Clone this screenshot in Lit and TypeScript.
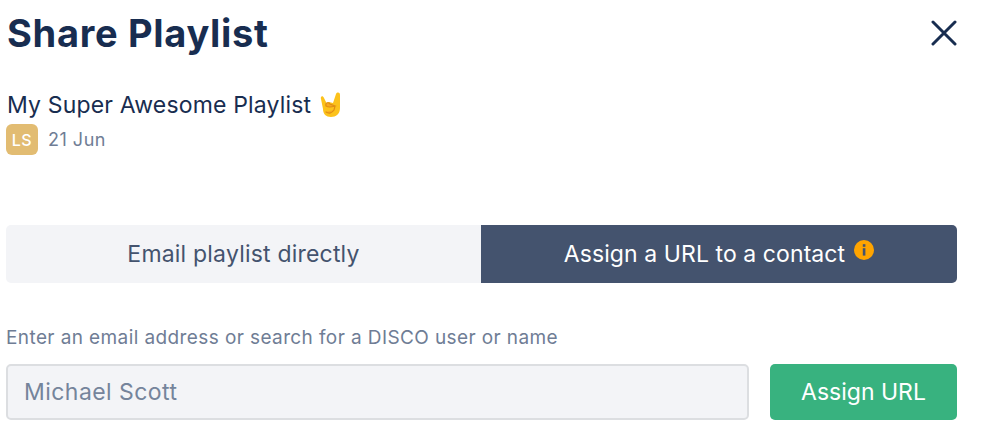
import { LitElement, html, css } from 'lit';
import { customElement } from 'lit/decorators.js';

@customElement("app-root")
export default class AppRoot extends LitElement {
    render() {
        return html`
            <div class="header">
                <h1>Share Playlist</h1>
                <svg class="close" width="26" height="26" viewBox="0 0 26 26">
                    <path d="M2 2 L24 24 M24 2 L2 24" stroke="#182d50" stroke-width="3" stroke-linecap="round"></path>
                </svg>
            </div>

            <div class="playlist">
                <span>My Super Awesome Playlist</span>
                <svg class="emoji" width="22" height="26" viewBox="0 0 22 26">
                    <path d="M1 7 C0 4 3 3 4 6 L7 12 L9 10 L13 11 L16 2 C17 0 20 0 20 3 L20 16 C20 22 16 25 11 25 C6 25 3 22 3 17 Z" fill="#fcc21b"></path>
                    <path d="M6 14 C5 10 9 10 10 12 L15 14 C12 15 9 16 6 14 Z M15 14 L14 18 M6 20 C9 22 12 21 14 18" fill="#f7a823" stroke="#e08e12" stroke-width="1.2" stroke-linecap="round"></path>
                </svg>
            </div>

            <div class="meta">
                <span class="avatar">LS</span>
                <span class="date">21 Jun</span>
            </div>

            <div class="tabs">
                <div class="tab">Email playlist directly</div>
                <div class="tab active">
                    <span>Assign a URL to a contact</span>
                    <svg class="info" width="20" height="20" viewBox="0 0 20 20">
                        <circle cx="10" cy="10" r="10" fill="#ffa400"></circle>
                        <rect x="8.8" y="4.2" width="2.6" height="2.6" fill="#44536e"></rect>
                        <rect x="8.8" y="8.2" width="2.6" height="7.4" fill="#44536e"></rect>
                    </svg>
                </div>
            </div>

            <div class="label">Enter an email address or search for a DISCO user or name</div>

            <div class="form">
                <div class="input">Michael Scott</div>
                <button>Assign URL</button>
            </div>
        `;
    };

    static styles = css`
        :host {
            display: block;
            width: 982px;
            height: 440px;
            overflow: hidden;
            box-sizing: border-box;
            padding: 0 25px 0 6px;
            background-color: #fff;
            font-family: "Inter", sans-serif;
            color: #182d50;
        }

        .header {
            display: flex;
            justify-content: space-between;
            align-items: center;
            height: 66px;
        }

        h1 {
            margin: 0 0 0 1px;
            font-size: 38px;
            font-weight: 700;
            letter-spacing: 0.7px;
            line-height: 66px;
        }

        .playlist {
            display: flex;
            align-items: center;
            gap: 9px;
            height: 30px;
            margin: 24px 0 0 1px;
            font-size: 23px;
            letter-spacing: 0.17px;
        }

        .meta {
            display: flex;
            align-items: center;
            gap: 10px;
            margin-top: 4px;
        }

        .avatar {
            display: flex;
            align-items: center;
            justify-content: center;
            width: 32px;
            height: 31px;
            border-radius: 6px;
            background-color: #e2bc72;
            color: #fff;
            font-size: 16px;
            font-weight: 500;
            letter-spacing: 0.5px;
        }

        .date {
            color: #6f7d95;
            font-size: 18px;
            letter-spacing: 0.5px;
        }

        .tabs {
            display: grid;
            grid-template-columns: 475px 476px;
            height: 58px;
            margin-top: 70px;
            border-radius: 5px;
            overflow: hidden;
        }

        .tab {
            display: flex;
            align-items: center;
            justify-content: center;
            background-color: #f3f4f7;
            color: #44536e;
            font-size: 23px;
            letter-spacing: 0.2px;
        }

        .active {
            gap: 9px;
            background-color: #44536e;
            color: #fff;
            letter-spacing: 0.08px;
        }

        .info {
            margin-bottom: 8px;
        }

        .label {
            margin-top: 43px;
            color: #6f7d95;
            font-size: 19px;
            letter-spacing: 0.4px;
            line-height: 24px;
        }

        .form {
            display: flex;
            gap: 21px;
            margin-top: 14px;
        }

        .input {
            flex: 1;
            box-sizing: border-box;
            height: 56px;
            padding-left: 16px;
            border: 2px solid #dcdee1;
            border-radius: 5px;
            background-color: #f3f4f7;
            color: #75849b;
            font-size: 23px;
            letter-spacing: 0.45px;
            line-height: 52px;
        }

        button {
            width: 187px;
            height: 56px;
            border: none;
            border-radius: 5px;
            background-color: #38b27f;
            color: #fff;
            font-family: inherit;
            font-size: 23px;
        }
    `;
};
